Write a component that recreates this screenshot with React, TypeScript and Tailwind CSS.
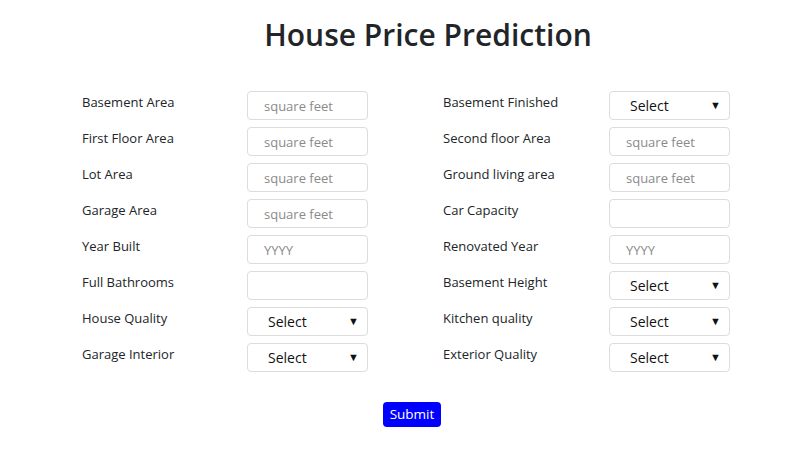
type Field = { label: string; kind: "text" | "select"; placeholder?: string }

const left: Field[] = [
    { label: "Basement Area", kind: "text", placeholder: "square feet" },
    { label: "First Floor Area", kind: "text", placeholder: "square feet" },
    { label: "Lot Area", kind: "text", placeholder: "square feet" },
    { label: "Garage Area", kind: "text", placeholder: "square feet" },
    { label: "Year Built", kind: "text", placeholder: "YYYY" },
    { label: "Full Bathrooms", kind: "text", placeholder: "" },
    { label: "House Quality", kind: "select" },
    { label: "Garage Interior", kind: "select" },
]

const right: Field[] = [
    { label: "Basement Finished", kind: "select" },
    { label: "Second floor Area", kind: "text", placeholder: "square feet" },
    { label: "Ground living area", kind: "text", placeholder: "square feet" },
    { label: "Car Capacity", kind: "text", placeholder: "" },
    { label: "Renovated Year", kind: "text", placeholder: "YYYY" },
    { label: "Basement Height", kind: "select" },
    { label: "Kitchen quality", kind: "select" },
    { label: "Exterior Quality", kind: "select" },
]

function Row({ field, wide }: { field: Field; wide?: boolean }) {
    return (
        <div className="flex items-start h-[36px]">
            <label className={`${wide ? "w-[166px]" : "w-[165px]"} text-[13px] text-[#212529] pt-[2px]`}>{field.label}</label>
            {field.kind === "text" ? (
                <input
                    type="text"
                    placeholder={field.placeholder}
                    className="w-[121px] h-[29px] px-4 text-[13px] rounded border border-[#dcdcdc] bg-white outline-none placeholder:text-[#8a8a8a]"
                />
            ) : (
                <div className="w-[121px] h-[29px] pl-5 pr-2 flex items-center justify-between text-[14px] text-[#111] rounded border border-[#dcdcdc] bg-white">
                    <span>Select</span>
                    <span className="text-[11px]">▼</span>
                </div>
            )}
        </div>
    )
}

function App() {
    return (
        <div className="w-[789px] h-[449px] bg-white" style={{ fontFamily: '"Open Sans", sans-serif' }}>
            <div className="flex justify-center pl-[67px] pt-[14px]">
                <h1 className="text-[30px] font-semibold text-[#212529] leading-[42px]">House Price Prediction</h1>
            </div>
            <div className="flex pl-[82px] pt-[35px] gap-[75px]">
                <div>
                    {left.map((f) => <Row key={f.label} field={f} />)}
                </div>
                <div>
                    {right.map((f) => <Row key={f.label} field={f} wide />)}
                </div>
            </div>
            <div className="flex justify-center pl-[35px] pt-[23px]">
                <button className="h-[25px] px-[7px] rounded bg-[#0000ff] text-white text-[13.5px]">Submit</button>
            </div>
        </div>
    )
}

export default App
